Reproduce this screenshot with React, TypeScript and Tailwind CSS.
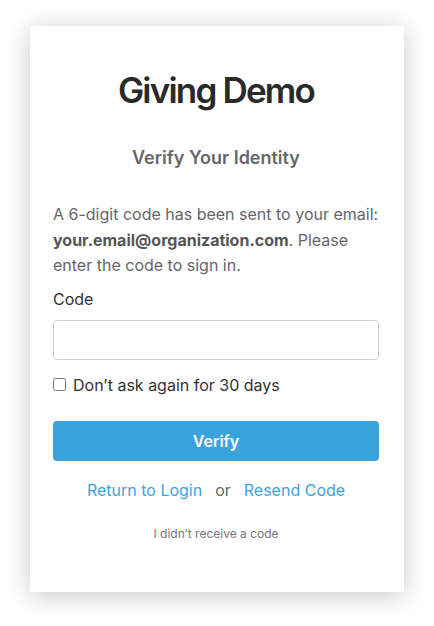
import { useState } from 'react'

export default function App() {
  const [code, setCode] = useState('')
  const [remember, setRemember] = useState(false)

  return (
    <div
      className="min-h-[626px] w-full bg-white pt-[26px] px-[30px]"
      style={{ fontFamily: 'Inter, "Noto Sans", sans-serif' }}
    >
      <div className="w-[374px] h-[566px] bg-white shadow-[0_4px_24px_rgba(0,0,0,0.22)] pl-[23px] pr-[25px] pt-[44px]">
        <h1 className="text-center text-[35px] leading-[40px] font-semibold tracking-[-1.8px] text-[#2a2a28]">
          Giving Demo
        </h1>
        <h2 className="mt-[36px] text-center text-[18px] leading-[24px] font-semibold text-[#666666]">
          Verify Your Identity
        </h2>

        <p className="mt-[32px] text-[16px] leading-[25.5px] text-[#666666]">
          A 6-digit code has been sent to your email:{' '}
          <span className="font-bold text-[#555555]">your.email@organization.com</span>. Please enter
          the code to sign in.
        </p>

        <label className="block mt-[8px] text-[16px] leading-[24px] text-[#333333]">Code</label>
        <input
          value={code}
          onChange={(e) => setCode(e.target.value)}
          className="block mt-[9px] w-full h-[40px] border border-[#cccccc] rounded-[4px] px-3 text-[16px] outline-none"
        />

        <label className="mt-[13px] flex items-center gap-[7px] text-[16px] leading-[24px] text-[#333333]">
          <input
            type="checkbox"
            checked={remember}
            onChange={(e) => setRemember(e.target.checked)}
            className="w-[13px] h-[13px] m-0"
          />
          Don’t ask again for 30 days
        </label>

        <button className="mt-[24px] w-full h-[40px] rounded-[4px] bg-[#3aa3db] text-white text-[16px] font-semibold">
          Verify
        </button>

        <div className="mt-[19px] flex justify-center items-center gap-[13px] text-[16px] leading-[20px]">
          <a className="text-[#3ea3dc]">Return to Login</a>
          <span className="text-[#666666]">or</span>
          <a className="text-[#3ea3dc]">Resend Code</a>
        </div>

        <p className="mt-[26px] text-center text-[12px] leading-[16px] text-[#777777]">
          I didn’t receive a code
        </p>
      </div>
    </div>
  )
}
